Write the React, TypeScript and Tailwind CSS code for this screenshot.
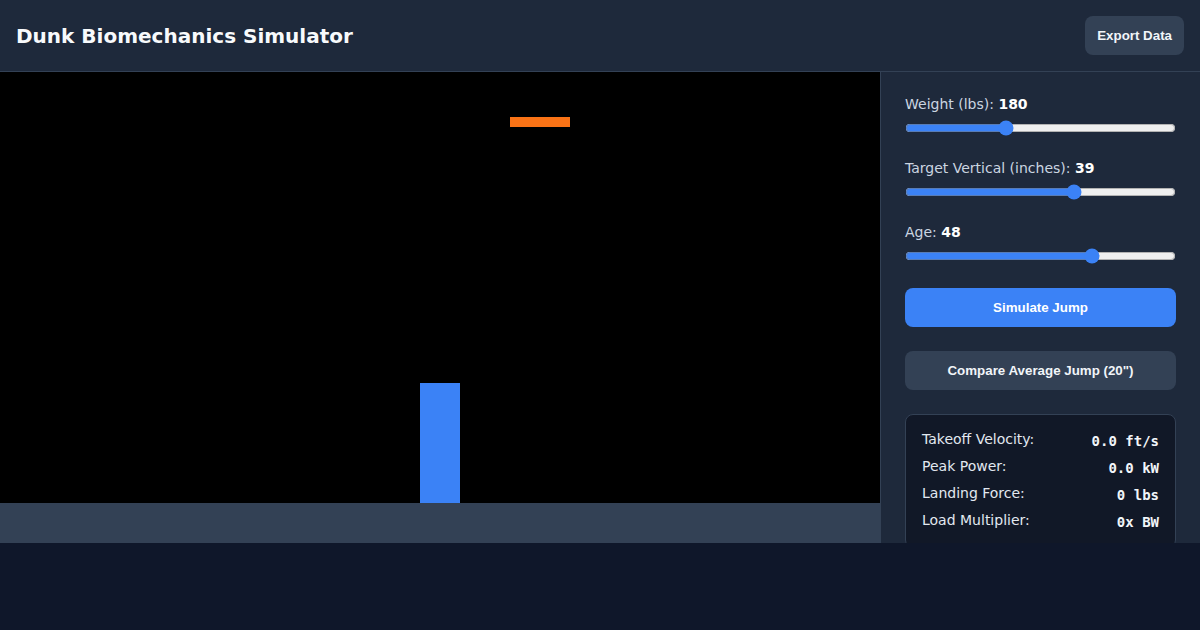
import React, { useState } from 'react';

const sans = { fontFamily: '"DejaVu Sans", sans-serif' };

type SliderProps = {
  label: string;
  value: number;
  min: number;
  max: number;
  onChange: (v: number) => void;
};

const Slider: React.FC<SliderProps> = ({ label, value, min, max, onChange }) => (
  <div className="flex flex-col gap-[7px]">
    <label className="text-[14px] leading-[17px] text-[#cbd5e1]">
      {label}: <span className="font-bold text-white">{value}</span>
    </label>
    <input
      type="range"
      min={min}
      max={max}
      value={value}
      onChange={(e) => onChange(Number(e.target.value))}
      className="w-full h-4 accent-[#3b82f6]"
    />
  </div>
);

const StatRow: React.FC<{ label: string; value: string }> = ({ label, value }) => (
  <div className="flex justify-between items-start h-[19px]">
    <span className="text-[14px] leading-[17px] text-[#e2e8f0]">{label}</span>
    <span
      className="mt-[2px] text-[14px] leading-[17px] font-bold text-[#f1f5f9]"
      style={{ fontFamily: '"DejaVu Sans Mono", monospace' }}
    >
      {value}
    </span>
  </div>
);

export default function App() {
  const [weight, setWeight] = useState(180);
  const [vertical, setVertical] = useState(39);
  const [age, setAge] = useState(48);

  const btnFont = { fontFamily: '"Liberation Sans", Arial, sans-serif' };

  return (
    <div className="min-h-screen bg-[#0f172a] text-white" style={sans}>
      {/* Header */}
      <header className="h-[72px] flex items-center justify-between px-4 bg-[#1e293b] border-b border-[#334155]">
        <h1 className="text-[20px] font-bold text-[#f8fafc]">Dunk Biomechanics Simulator</h1>
        <button
          className="px-3 py-3 rounded-lg bg-[#334155] text-[13.333px] leading-[15px] font-bold text-[#f1f5f9]"
          style={btnFont}
        >
          Export Data
        </button>
      </header>

      {/* Main */}
      <div className="flex h-[471px] overflow-hidden">
        <div className="flex-1 bg-black">
          <svg width="880" height="471" viewBox="0 0 880 471" className="block">
            <rect x="0" y="0" width="880" height="431" fill="#000000" />
            <rect x="510" y="45" width="60" height="10" fill="#f97316" />
            <rect x="420" y="311" width="40" height="120" fill="#3b82f6" />
            <rect x="0" y="431" width="880" height="40" fill="#334155" />
          </svg>
        </div>

        <aside className="w-[320px] shrink-0 border-l border-[#334155] bg-[#1e293b] p-6 flex flex-col gap-6">
          <Slider label="Weight (lbs)" value={weight} min={100} max={320} onChange={setWeight} />
          <Slider label="Target Vertical (inches)" value={vertical} min={20} max={50} onChange={setVertical} />
          <Slider label="Age" value={age} min={20} max={60} onChange={setAge} />

          <button
            className="w-full py-3 rounded-lg bg-[#3b82f6] text-[13.333px] leading-[15px] font-bold text-white"
            style={btnFont}
          >
            Simulate Jump
          </button>
          <button
            className="w-full py-3 rounded-lg bg-[#334155] text-[13.333px] leading-[15px] font-bold text-[#f1f5f9]"
            style={btnFont}
          >
            Compare Average Jump (20")
          </button>

          <div className="shrink-0 rounded-lg border border-[#334155] bg-[#111827] p-4 flex flex-col gap-2">
            <StatRow label="Takeoff Velocity:" value="0.0 ft/s" />
            <StatRow label="Peak Power:" value="0.0 kW" />
            <StatRow label="Landing Force:" value="0 lbs" />
            <StatRow label="Load Multiplier:" value="0x BW" />
          </div>
        </aside>
      </div>
    </div>
  );
}
